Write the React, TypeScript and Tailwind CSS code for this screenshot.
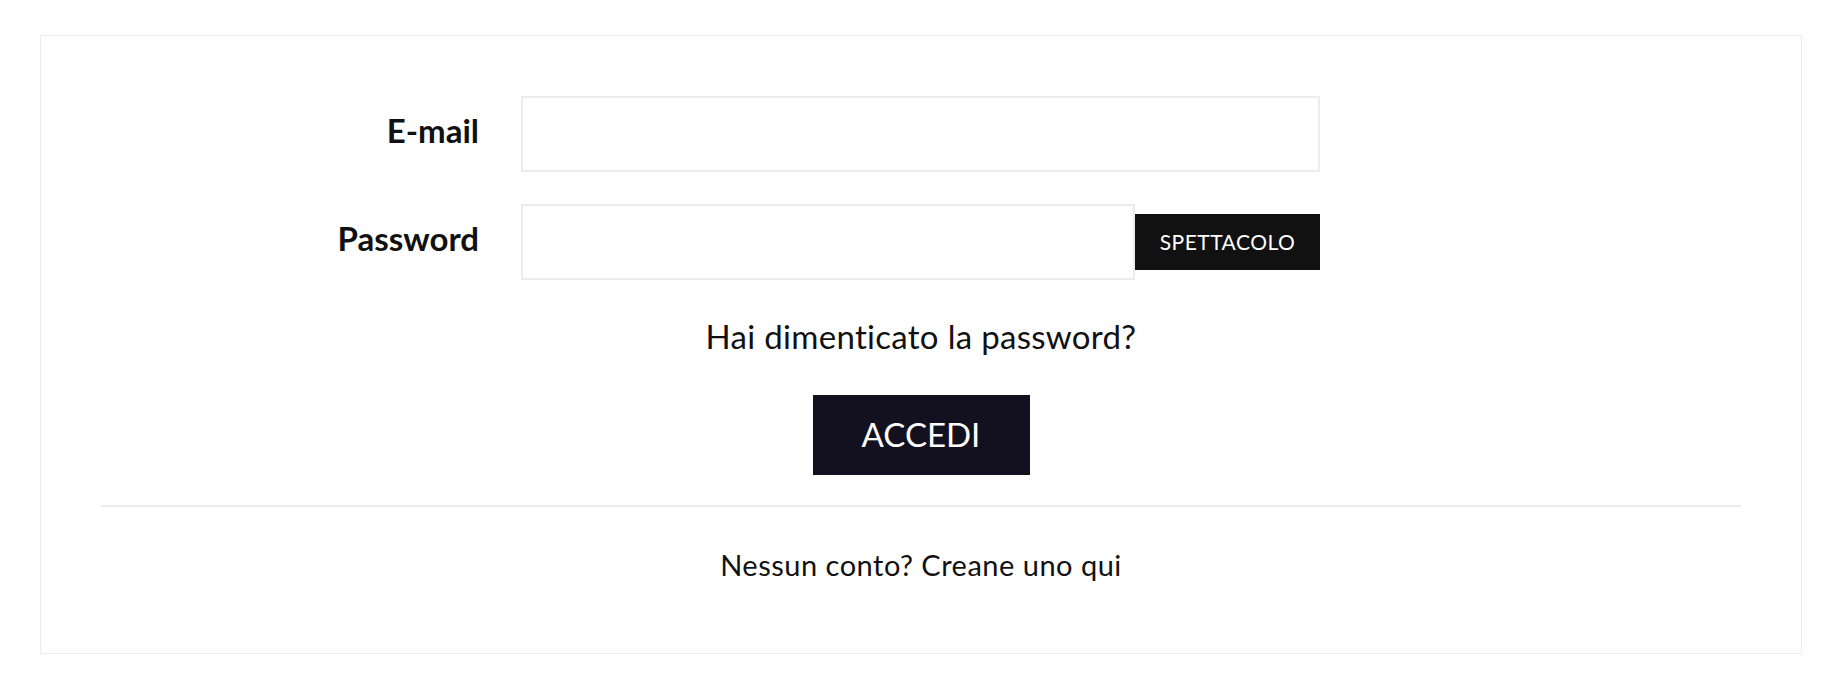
export default function App() {
  return (
    <div className="min-h-[686px] bg-white px-[40px] pt-[35px] font-['Lato',sans-serif] text-[#111]">
      <section className="border border-[#ebebeb] px-[60px] pt-[60px] pb-[67px]">
        <form className="flex flex-col">
          <div className="flex items-start">
            <label className="w-[378px] text-right text-[33px] font-bold leading-[68px]">E-mail</label>
            <input
              type="email"
              className="ml-[42px] h-[76px] w-[799px] border-2 border-[#ececec] bg-white px-4 outline-none"
            />
          </div>
          <div className="mt-[32px] flex items-start">
            <label className="w-[378px] text-right text-[33px] font-bold leading-[68px]">Password</label>
            <input
              type="password"
              className="ml-[42px] h-[76px] w-[614px] border-2 border-[#ececec] bg-white px-4 outline-none"
            />
            <button
              type="button"
              className="mt-[10px] h-[56px] w-[185px] bg-[#111] text-[21px] uppercase tracking-[0.5px] text-white"
            >
              Spettacolo
            </button>
          </div>
          <a className="mt-[32px] text-center text-[33px] tracking-[0.3px]">
            Hai dimenticato la password?
          </a>
          <div className="mt-[33px] flex justify-center">
            <button
              type="submit"
              className="h-[80px] w-[217px] bg-[#13111f] text-[33px] uppercase text-white"
            >
              Accedi
            </button>
          </div>
        </form>
        <hr className="mt-[30px] border-t-2 border-[#ececec]" />
        <p className="mt-[36px] text-center text-[29px] tracking-[0.5px]">
          Nessun conto? Creane uno qui
        </p>
      </section>
    </div>
  );
}
